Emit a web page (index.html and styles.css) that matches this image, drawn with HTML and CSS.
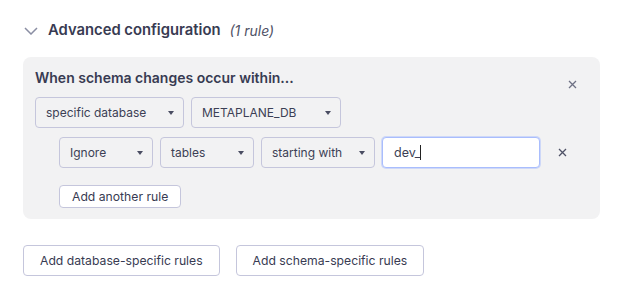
FILE: index.html
```html
<!DOCTYPE html>
<html lang="en">
<head>
    <meta charset="UTF-8">
    <title>Advanced configuration</title>
    <link rel="stylesheet" href="styles.css">
</head>
<body>
    <div class="config">
        <div class="section-header">
            <svg class="chevron" width="14" height="8" viewBox="0 0 14 8">
                <path d="M1 1 L7 7 L13 1" fill="none" stroke="#8a8ea3" stroke-width="1.5"/>
            </svg>
            <span class="section-title">Advanced configuration</span>
            <span class="section-count">(1 rule)</span>
        </div>

        <div class="panel">
            <div class="panel-top">
                <div class="panel-title">When schema changes occur within...</div>
                <button class="icon-btn close-panel" aria-label="Remove">
                    <svg width="9" height="9" viewBox="0 0 9 9"><path d="M1 1 L8 8 M8 1 L1 8" stroke="#6e7184" stroke-width="1.3"/></svg>
                </button>
            </div>

            <div class="row">
                <div class="select w-150"><span>specific database</span><span class="caret"></span></div>
                <div class="select w-151"><span>METAPLANE_DB</span><span class="caret"></span></div>
            </div>

            <div class="row rule-row">
                <div class="select w-95"><span>Ignore</span><span class="caret"></span></div>
                <div class="select w-95"><span>tables</span><span class="caret"></span></div>
                <div class="select w-115"><span>starting with</span><span class="caret"></span></div>
                <div class="text-input">dev_<span class="cursor"></span></div>
                <button class="icon-btn remove-rule" aria-label="Remove rule">
                    <svg width="9" height="9" viewBox="0 0 9 9"><path d="M1 1 L8 8 M8 1 L1 8" stroke="#4f5266" stroke-width="1.3"/></svg>
                </button>
            </div>

            <div class="rule-actions">
                <button class="btn btn-small">Add another rule</button>
            </div>
        </div>

        <div class="footer-actions">
            <button class="btn">Add database-specific rules</button>
            <button class="btn">Add schema-specific rules</button>
        </div>
    </div>
</body>
</html>
```

FILE: styles.css
```css
:root {
    --text-primary: #363a52;
    --border: #c5c6dc;
    --panel-bg: #f2f2f3;
    --focus: #a9bdfd;
}

* {
    margin: 0;
    padding: 0;
    box-sizing: border-box;
    font-family: 'Inter', 'Noto Sans', sans-serif;
}

body {
    background: #ffffff;
    color: var(--text-primary);
}

.config {
    padding: 19px 22px 0 23px;
}

/* Header */
.section-header {
    display: flex;
    align-items: center;
    height: 22px;
}

.chevron {
    margin: 1px 10px 0 1px;
}

.section-title {
    font-size: 14.8px;
    font-weight: 600;
    color: #383b52;
}

.section-count {
    font-size: 14px;
    font-style: italic;
    color: #4e5165;
    margin-left: 9px;
}

/* Panel */
.panel {
    margin-top: 16px;
    background: var(--panel-bg);
    border-radius: 8px;
    padding: 11px 12px 11px 12px;
}

.panel-top {
    display: flex;
    justify-content: space-between;
    align-items: flex-start;
    height: 20px;
}

.panel-title {
    font-size: 14px;
    font-weight: 600;
    line-height: 20px;
    color: #383b52;
}

.icon-btn {
    background: none;
    border: none;
    display: flex;
    cursor: pointer;
}

.close-panel {
    margin: 12px 11px 0 0;
}

.row {
    display: flex;
    align-items: center;
    gap: 7px;
    margin-top: 9px;
}

.rule-row {
    padding-left: 24px;
}

.select {
    height: 31px;
    border: 1px solid var(--border);
    border-radius: 4px;
    background: var(--panel-bg);
    font-size: 12px;
    color: #3c3f55;
    display: flex;
    align-items: center;
    justify-content: space-between;
    padding: 0 9px 0 10px;
}

.caret {
    width: 0;
    height: 0;
    border-left: 3.5px solid transparent;
    border-right: 3.5px solid transparent;
    border-top: 4px solid #4a4d62;
}

.w-150 { width: 149px; }
.w-151 { width: 150px; }
.w-95 { width: 94px; }
.w-115 { width: 114px; }

.text-input {
    width: 158px;
    height: 31px;
    background: #ffffff;
    border: 1.5px solid var(--focus);
    border-radius: 4px;
    box-shadow: 0 0 0 1px rgba(169, 189, 253, 0.5);
    font-size: 12.5px;
    color: #3c3f55;
    display: flex;
    align-items: center;
    padding: 0 11px;
}

.cursor {
    display: inline-block;
    width: 1px;
    height: 15px;
    background: #222;
}

.remove-rule {
    margin-left: 11px;
}

.rule-actions {
    padding-left: 24px;
    margin-top: 17px;
}

/* Buttons */
.btn {
    background: #ffffff;
    border: 1px solid var(--border);
    border-radius: 4px;
    color: #383b52;
    font-size: 12.2px;
    height: 31px;
    padding: 0 16px;
    cursor: pointer;
}

.btn-small {
    height: 23px;
    padding: 0 12px;
}

.footer-actions {
    display: flex;
    gap: 16px;
    margin-top: 26px;
}
```
